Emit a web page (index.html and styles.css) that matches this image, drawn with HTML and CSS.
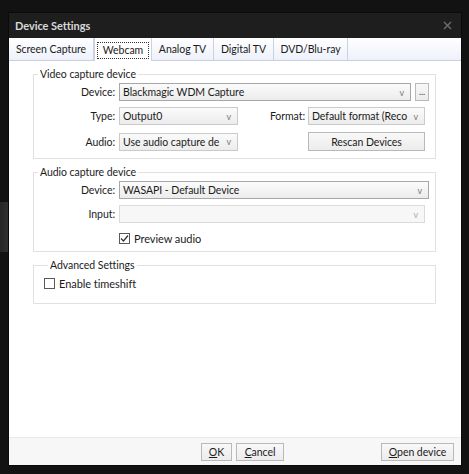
FILE: index.html
```html
<!DOCTYPE html>
<html>
<head>
<meta charset="utf-8">
<link rel="stylesheet" href="styles.css">
</head>
<body>
<div class="ghost"></div>
<div class="dialog">
  <div class="titlebar">
    <span class="title">Device Settings</span>
    <svg class="close" width="9" height="9" viewBox="0 0 9 9"><path d="M1 1L8 8M8 1L1 8" stroke="#6e6e6e" stroke-width="1.4"/></svg>
  </div>
  <div class="tabs">
    <div class="tab t1">Screen Capture</div>
    <div class="tab t2 active"><span class="focus">Webcam</span></div>
    <div class="tab t3">Analog TV</div>
    <div class="tab t4">Digital TV</div>
    <div class="tab t5">DVD/Blu-ray</div>
    <div class="tab-fill"></div>
  </div>
  <div class="content">
    <fieldset class="group video">
      <legend>Video capture device</legend>
      <div class="row">
        <span class="label">Device:</span>
        <div class="combo grow strong"><span class="val">Blackmagic WDM Capture</span><span class="arrow">v</span></div>
        <div class="btn dots">...</div>
      </div>
      <div class="row r2">
        <span class="label">Type:</span>
        <div class="combo small"><span class="val">Output0</span><span class="arrow">v</span></div>
        <span class="label2">Format:</span>
        <div class="combo fmt"><span class="val">Default format (Reco</span><span class="arrow">v</span></div>
      </div>
      <div class="row r3">
        <span class="label">Audio:</span>
        <div class="combo small"><span class="val">Use audio capture de</span><span class="arrow">v</span></div>
        <span class="spacer"></span>
        <div class="btn rescan">Rescan Devices</div>
      </div>
    </fieldset>
    <fieldset class="group audio">
      <legend>Audio capture device</legend>
      <div class="row">
        <span class="label">Device:</span>
        <div class="combo grow strong"><span class="val">WASAPI - Default Device</span><span class="arrow">v</span></div>
      </div>
      <div class="row r2">
        <span class="label">Input:</span>
        <div class="combo grow disabled"><span class="val"></span><span class="arrow">v</span></div>
      </div>
      <div class="row chkrow">
        <span class="label"></span>
        <span class="check"><svg width="11" height="11" viewBox="0 0 11 11"><path d="M2 5.5L4.5 8L9 2.5" fill="none" stroke="#333" stroke-width="1.2"/></svg></span>
        <span class="chklabel">Preview audio</span>
      </div>
    </fieldset>
    <fieldset class="group adv">
      <legend>Advanced Settings</legend>
      <div class="advrow">
        <span class="check"></span>
        <span class="chklabel">Enable timeshift</span>
      </div>
    </fieldset>
  </div>
  <div class="footer">
    <div class="btn ok"><u>O</u>K</div>
    <div class="btn cancel"><u>C</u>ancel</div>
    <span class="spacer"></span>
    <div class="btn open"><u>O</u>pen device</div>
  </div>
</div>
</body>
</html>
```
FILE: styles.css
```css
html, body {
  margin: 0;
  padding: 0;
  background: #121212;
  width: 469px;
  height: 474px;
  overflow: hidden;
  font-family: Lato, "Noto Sans", sans-serif;
  font-size: 10.5px;
  letter-spacing: -0.05px;
  color: #1b1b1b;
}
.ghost {
  position: absolute;
  left: 0;
  top: 202px;
  width: 8px;
  height: 50px;
  background: linear-gradient(90deg, #262626, #303030);
}
.dialog {
  position: relative;
  margin: 13px 0 0 9px;
  width: 452px;
  height: 452px;
  display: flex;
  flex-direction: column;
  background: #fff;
  box-shadow: 0 0 0 1px #0a0a0a;
}
.titlebar {
  height: 25px;
  background: #1e1e1e;
  display: flex;
  align-items: center;
  padding: 0 9px 0 6px;
  flex: none;
}
.title {
  color: #d9d9d9;
  font-weight: bold;
  font-size: 11px;
  flex: 1;
}
.close {
  display: block;
}
.tabs {
  height: 22px;
  display: flex;
  flex: none;
  background: linear-gradient(#ffffff, #eef1fb);
  border-bottom: 1px solid #c9cfe0;
}
.tab {
  display: flex;
  align-items: center;
  justify-content: center;
  border-right: 1px solid #cdd2e2;
  box-sizing: border-box;
  white-space: nowrap;
}
.t1 { width: 85px; }
.t2 { width: 58px; }
.t3 { width: 62px; }
.t4 { width: 60px; }
.t5 { width: 74px; }
.tab.active {
  background: #fff;
  border-left: 1px solid #cdd2e2;
  margin-bottom: -1px;
  height: 23px;
}
.focus {
  border: 1px dotted #333;
  padding: 1px 5px 2px;
  margin-top: 1px;
}
.tab-fill {
  flex: 1;
}
.content {
  flex: 1;
  padding: 6px 25px 0 24px;
  display: flex;
  flex-direction: column;
  gap: 6px;
}
.group {
  margin: 0;
  border: 1px solid #e1e1e1;
  padding: 2px 6px 7px 0;
  min-width: 0;
}
legend {
  margin-left: 4px;
  padding: 0 2px;
  line-height: 14px;
  color: #1b1b1b;
}
.row {
  display: flex;
  align-items: center;
  height: 18px;
}
.row.r2 { margin-top: 6px; padding-right: 4px; }
.row.r3 { margin-top: 7px; padding-right: 4px; height: 19px; }
.label {
  width: 81px;
  text-align: right;
  flex: none;
  margin-right: 4px;
}
.label2 {
  flex: 1;
  text-align: right;
  margin-right: 3px;
}
.spacer { flex: 1; }
.combo {
  height: 18px;
  box-sizing: border-box;
  border: 1px solid #cacaca;
  background: linear-gradient(#fbfbfb, #ececec);
  display: flex;
  align-items: center;
  padding: 0 6px 0 3px;
}
.combo.strong { border-color: #a7a7a7; }
.combo.disabled { background: #f7f7f7; border-color: #dadada; }
.combo.disabled .arrow { color: #aaa; }
.combo.grow { flex: 1; }
.combo.small { width: 119px; }
.combo.fmt { width: 117px; }
.val {
  flex: 1;
  white-space: nowrap;
  overflow: hidden;
}
.arrow {
  color: #777;
  font-size: 9px;
  margin-left: 4px;
}
.btn {
  box-sizing: border-box;
  border: 1px solid #b9b9b9;
  background: linear-gradient(#f8f8f8, #ececec);
  display: flex;
  align-items: center;
  justify-content: center;
  height: 18px;
}
.btn.dots {
  width: 14px;
  margin-left: 4px;
  font-size: 9px;
  color: #444;
  align-items: flex-end;
  padding-bottom: 3px;
}
.btn.rescan { width: 117px; height: 19px; }
.chkrow { margin-top: 9px; height: 12px; }
.check {
  width: 11px;
  height: 11px;
  box-sizing: border-box;
  border: 1px solid #5a5a5a;
  background: #fff;
  display: flex;
  flex: none;
}
.check svg { margin: -1px; }
.chklabel { margin-left: 4px; font-size: 11px; }
.group.audio { padding-bottom: 7px; padding-top: 2px; }
.group.adv { padding: 0 6px 13px 10px; }
.advrow {
  display: flex;
  align-items: center;
  margin-top: 5px;
}
.footer {
  height: 27px;
  flex: none;
  border-top: 1px solid #e9e9e9;
  background: #f7f7f7;
  display: flex;
  align-items: center;
  padding: 0 7px 0 192px;
}
.btn.ok { width: 31px; }
.btn.cancel { width: 48px; margin-left: 4px; }
.btn.open { width: 73px; }
u { text-decoration: underline; text-underline-offset: 1px; }
```
